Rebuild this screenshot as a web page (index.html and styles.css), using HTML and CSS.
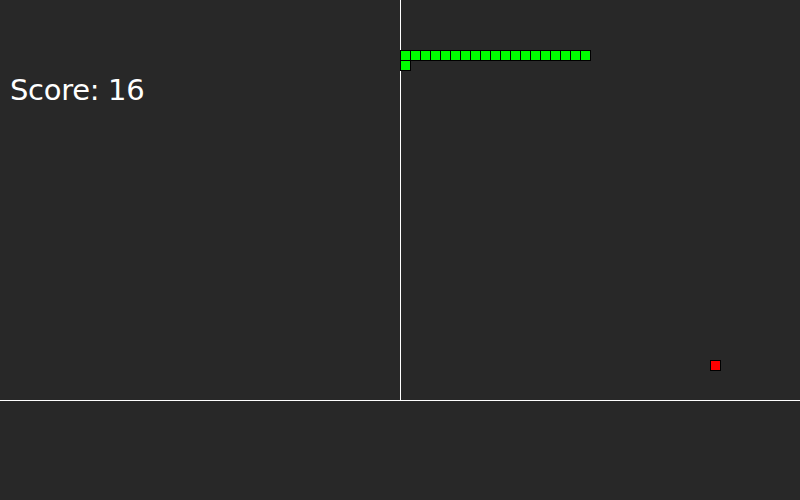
FILE: index.html
```html
<!DOCTYPE html>
<html>
<head>
<meta charset="utf-8">
<link rel="stylesheet" href="styles.css">
</head>
<body>
<div class="screen">
  <div class="field">
    <div class="panel"><div class="score">Score: 16</div></div>
    <div class="divider"></div>
    <div class="arena"></div>
    <div class="board">
      <div class="cell snake" style="grid-column:41;grid-row:6"></div>
      <div class="cell snake" style="grid-column:42;grid-row:6"></div>
      <div class="cell snake" style="grid-column:43;grid-row:6"></div>
      <div class="cell snake" style="grid-column:44;grid-row:6"></div>
      <div class="cell snake" style="grid-column:45;grid-row:6"></div>
      <div class="cell snake" style="grid-column:46;grid-row:6"></div>
      <div class="cell snake" style="grid-column:47;grid-row:6"></div>
      <div class="cell snake" style="grid-column:48;grid-row:6"></div>
      <div class="cell snake" style="grid-column:49;grid-row:6"></div>
      <div class="cell snake" style="grid-column:50;grid-row:6"></div>
      <div class="cell snake" style="grid-column:51;grid-row:6"></div>
      <div class="cell snake" style="grid-column:52;grid-row:6"></div>
      <div class="cell snake" style="grid-column:53;grid-row:6"></div>
      <div class="cell snake" style="grid-column:54;grid-row:6"></div>
      <div class="cell snake" style="grid-column:55;grid-row:6"></div>
      <div class="cell snake" style="grid-column:56;grid-row:6"></div>
      <div class="cell snake" style="grid-column:57;grid-row:6"></div>
      <div class="cell snake" style="grid-column:58;grid-row:6"></div>
      <div class="cell snake" style="grid-column:59;grid-row:6"></div>
      <div class="cell snake" style="grid-column:41;grid-row:7"></div>
      <div class="cell food" style="grid-column:72;grid-row:37"></div>
    </div>
  </div>
  <div class="footer"></div>
</div>
</body>
</html>
```

FILE: styles.css
```css
html, body {
  margin: 0;
  padding: 0;
  background: #282828;
}
.screen {
  width: 800px;
  height: 500px;
  background: #282828;
  overflow: hidden;
}
.field {
  position: relative;
  height: 400px;
  border-bottom: 1px solid #ffffff;
  display: grid;
  grid-template-columns: 400px 1px 399px;
}
.panel {
  padding: 72px 0 0 10px;
}
.score {
  font-family: "DejaVu Sans", sans-serif;
  font-size: 29px;
  letter-spacing: -0.3px;
  line-height: 36px;
  color: #ffffff;
}
.divider {
  background: #ffffff;
}
.board {
  position: absolute;
  inset: 0;
  display: grid;
  grid-template-columns: repeat(80, 10px);
  grid-template-rows: repeat(40, 10px);
}
.cell {
  width: 11px;
  height: 11px;
  box-sizing: border-box;
  border: 1px solid #000000;
}
.snake {
  background: #00ff00;
}
.food {
  background: #ff0000;
}
.footer {
  height: 99px;
}
```
